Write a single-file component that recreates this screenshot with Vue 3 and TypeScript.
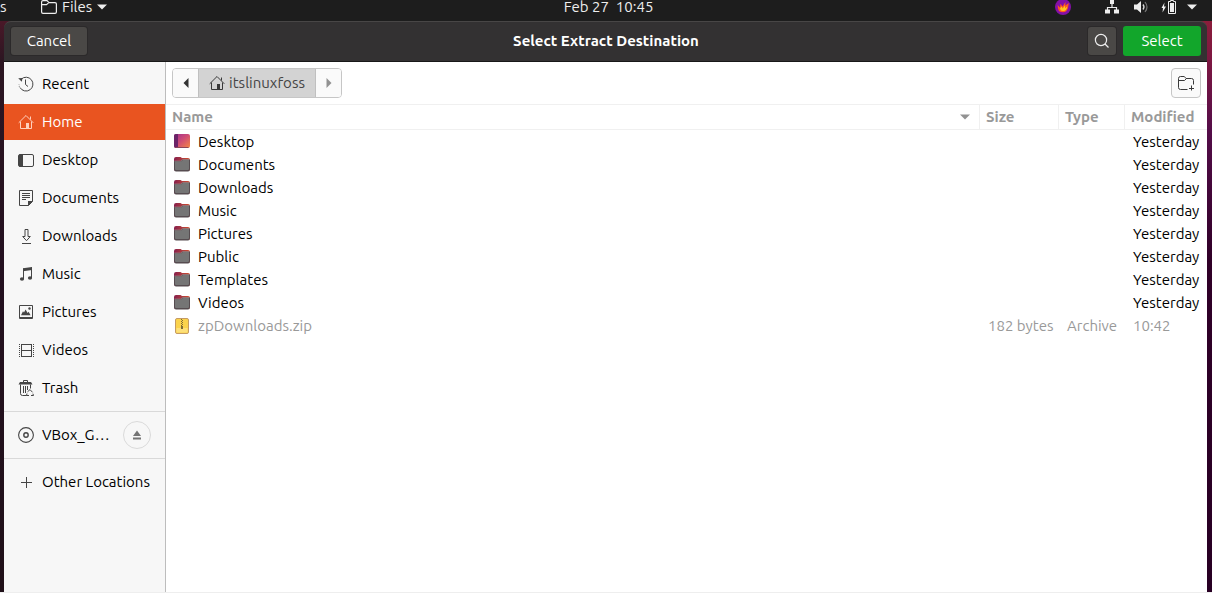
<script setup lang="ts">
interface Place {
  name: string
  icon: string
}

interface Entry {
  name: string
  kind: 'desktop' | 'folder' | 'archive'
  size: string
  type: string
  modified: string
}

const places: Place[] = [
  { name: 'Recent', icon: 'recent' },
  { name: 'Home', icon: 'home' },
  { name: 'Desktop', icon: 'desktop' },
  { name: 'Documents', icon: 'documents' },
  { name: 'Downloads', icon: 'downloads' },
  { name: 'Music', icon: 'music' },
  { name: 'Pictures', icon: 'pictures' },
  { name: 'Videos', icon: 'videos' },
  { name: 'Trash', icon: 'trash' },
]

const folder = (name: string): Entry => ({
  name,
  kind: name === 'Desktop' ? 'desktop' : 'folder',
  size: '',
  type: '',
  modified: 'Yesterday',
})

const entries: Entry[] = [
  ...['Desktop', 'Documents', 'Downloads', 'Music', 'Pictures', 'Public', 'Templates', 'Videos'].map(folder),
  { name: 'zpDownloads.zip', kind: 'archive', size: '182 bytes', type: 'Archive', modified: '10:42' },
]
</script>

<template>
  <div class="screen">
    <header class="panel">
      <div class="panel-left">
        <span class="activities">s</span>
        <button class="app-menu" type="button">
          <svg width="16" height="16" viewBox="0 0 16 16" fill="none" stroke="#eee" stroke-width="1.2">
            <path d="M.6 12.5V3Q.6 1.6 2 1.6h4L8 3.6h6q1.4 0 1.4 1.4v8q0 1.4-1.4 1.4H2Q.6 14.4.6 13zM1 5.6h4.5l2.3-2" />
          </svg>
          <span>Files</span>
          <svg class="caret" width="10" height="6" viewBox="0 0 10 6"><path d="M0 .5h10L5 5.5z" fill="#eee" /></svg>
        </button>
      </div>
      <time class="clock">Feb 27&nbsp; 10:45</time>
      <div class="tray">
        <svg class="flame" width="16" height="16" viewBox="0 0 16 16">
          <circle cx="8" cy="8" r="8" fill="#8410a8" />
          <path d="M2.5 6 5 8.500l.5-3.700 2 2.700L10.500 3l-.2 3.500L13.800 4l-.8 5q-1.200 4.200-5.200 4.200T3.200 10z" fill="#ff5a1e" />
          <path d="m5 9.500 1.600-2 1 2L10 6.500v2.700l2.200-1.700q-.5 4.500-4.200 4.500-2.700 0-3-2.500z" fill="#ffc71f" />
        </svg>
        <svg class="network" width="16" height="16" viewBox="0 0 16 16">
          <path d="M6 1h4v4H6zM1 10.500h5v4H1zM10 10.500h5v4h-5z" fill="#eee" />
          <path d="M8 5v3.500M3.500 11V8.500h9V11" fill="none" stroke="#eee" stroke-width="1.2" />
        </svg>
        <svg class="sound" width="16" height="16" viewBox="0 0 16 16">
          <path d="M1 5.500h3L8 2v12l-4-3.500H1z" fill="#eee" />
          <path d="M10 5.500q2 2.500 0 5" fill="none" stroke="#ddd" stroke-width="1.3" />
          <path d="M12 3q4 5 0 10" fill="none" stroke="#777" stroke-width="1.2" />
        </svg>
        <svg class="battery" width="16" height="16" viewBox="0 0 16 16">
          <path d="M3.500 3.500.5 9H2l-.5 4.500 3.500-6H3z" fill="#eee" />
          <path d="M7.500 2.500h2v-1h3v1h2v12h-7z" fill="none" stroke="#eee" />
          <path d="M9 4h4v9H9z" fill="#eee" />
        </svg>
        <svg width="10" height="6" viewBox="0 0 10 6"><path d="M0 .5h10L5 5.5z" fill="#eee" /></svg>
      </div>
    </header>

    <main class="desktop">
      <section class="dialog" aria-labelledby="dialog-title">
        <div class="titlebar">
          <div><button class="dark-button cancel" type="button">Cancel</button></div>
          <h1 id="dialog-title">Select Extract Destination</h1>
          <div class="actions">
            <button class="dark-button search" type="button" aria-label="Search">
              <svg width="16" height="16" viewBox="0 0 16 16" fill="none" stroke="#eee" stroke-width="1.2">
                <circle cx="7" cy="7" r="5.6" /><path d="m11 11 3.5 3.5" />
              </svg>
            </button>
            <button class="dark-button select" type="button">Select</button>
          </div>
        </div>

        <div class="body">
          <nav class="sidebar" aria-label="Places">
            <ul class="places">
              <li v-for="place in places" :key="place.name">
                <a href="#" class="place" :class="{ active: place.name === 'Home' }">
                  <svg width="16" height="16" viewBox="0 0 16 16" fill="none" stroke="currentColor">
                    <template v-if="place.icon === 'recent'">
                      <path d="M3.2 3.2A6.9 6.9 0 1 1 2 11.5" />
                      <path d="M1 8.2v.3M1.3 10.2l.2.3" stroke-width="1.4" />
                      <path d="M.2 2.2 4.5 2 3.8 5.8z" fill="currentColor" stroke="none" />
                      <path d="M7.5 3.5v5l2.5 2" />
                    </template>
                    <template v-else-if="place.icon === 'home'">
                      <path d="M.7 8.8 8 1.5l7.3 7.3M2.5 7.5v7h11v-7M12.5 5.5v-3" />
                      <path d="M8 9h3v5.5H8z" fill="currentColor" stroke="none" />
                    </template>
                    <template v-else-if="place.icon === 'desktop'">
                      <rect x=".5" y="2.5" width="15" height="12" rx="1.5" />
                      <path d="M1 2.5h4v12H1z" fill="currentColor" stroke="none" />
                    </template>
                    <template v-else-if="place.icon === 'documents'">
                      <path d="M1.5.5h13v11l-4 4h-9zM4 3.5h8M4 5.5h8M4 7.5h8M4 9.5h4" />
                      <path d="M10 11h5l-5 5z" fill="currentColor" stroke="none" />
                    </template>
                    <template v-else-if="place.icon === 'downloads'">
                      <path d="M7 1.5h3v7h2.3l-3.8 4.2-3.8-4.2H7zM4 15.5h9" />
                    </template>
                    <template v-else-if="place.icon === 'music'">
                      <path d="M5.5 13V2.5M13.5 12V1.5" />
                      <path d="M5 2.2 14 1v3L5 5.2z" fill="currentColor" stroke="none" />
                      <ellipse cx="4" cy="13" rx="2.1" ry="1.8" fill="currentColor" stroke="none" />
                      <ellipse cx="12" cy="12" rx="2.1" ry="1.8" fill="currentColor" stroke="none" />
                    </template>
                    <template v-else-if="place.icon === 'pictures'">
                      <path d="M1.5 1.5h13v13h-13zM1 13.5h14" />
                      <path d="m3 11.3 2-4 1 1.2 1.6-3 2 3.4 1-1.2 2 3.6z" fill="currentColor" stroke="none" />
                      <circle cx="11.5" cy="4.5" r="1.2" fill="currentColor" stroke="none" />
                    </template>
                    <template v-else-if="place.icon === 'videos'">
                      <path d="M3.5 2v13M13.5 2v13M3.5 2.5h10M3.5 8.5h10M3.5 14.5h10" />
                      <path d="M1.5 2v13M15.5 2v13" stroke-dasharray="1 1" />
                    </template>
                    <template v-else>
                      <path d="M5.5 2.5v-2h4v2M2.5 4.5v9q0 2 2 2h4M12.5 4.5v4" />
                      <path d="M2 2h11l1.5 2.5H.5z" fill="currentColor" stroke="none" />
                      <path d="M5.5 6v7M7.5 6v7M9.5 6v4" />
                      <path d="M9.5 11.8 12 9.6l2.5 2.7M9 13.5l-.5 2H11M13 15.5h2.5l-.6-1.8" />
                    </template>
                  </svg>
                  <span>{{ place.name }}</span>
                </a>
              </li>
            </ul>
            <div class="mount">
              <a href="#" class="place">
                <svg width="16" height="16" viewBox="0 0 16 16" fill="none" stroke="currentColor">
                  <circle cx="8" cy="8" r="7.4" stroke-width="1.1" /><circle cx="8" cy="8" r="2.2" stroke-width="1.4" />
                </svg>
                <span>VBox_G…</span>
              </a>
              <button class="eject" type="button" aria-label="Eject">
                <svg width="10" height="10" viewBox="0 0 10 10"><path d="M5 .5 9 6H1zM1 7.5h8v2H1z" fill="#747474" /></svg>
              </button>
            </div>
            <a href="#" class="place other">
              <svg width="16" height="16" viewBox="0 0 16 16" fill="none" stroke="currentColor">
                <path d="M3 8.5h11M8.5 3v11" />
              </svg>
              <span>Other Locations</span>
            </a>
          </nav>

          <div class="browser">
            <div class="toolbar">
              <div class="pathbar">
                <button class="step" type="button" aria-label="Back">
                  <svg width="6" height="10" viewBox="0 0 6 10"><path d="M5.5 0v10L.5 5z" fill="#333" /></svg>
                </button>
                <button class="crumb" type="button">
                  <svg width="16" height="16" viewBox="0 0 16 16" fill="none" stroke="#3a3a3a">
                    <path d="M.7 8.8 8 1.5l7.3 7.3M2.5 7.5v7h11v-7M12.5 5.5v-3" />
                    <path d="M8 9h3v5.5H8z" fill="#3a3a3a" stroke="none" />
                  </svg>
                  <span>itslinuxfoss</span>
                </button>
                <button class="step" type="button" aria-label="Forward">
                  <svg width="6" height="10" viewBox="0 0 6 10"><path d="M.5 0v10l5-5z" fill="#929292" /></svg>
                </button>
              </div>
              <button class="new-folder" type="button" aria-label="Create Folder">
                <svg width="16" height="16" viewBox="0 0 16 16" fill="none" stroke="#3a3a3a">
                  <path d="M9.5 14.5h-7q-2 0-2-2v-9q0-2 2-2h3.8l1.7 2h5.500q2 0 2 2v4M.5 5.500h6l2-2M13.500 10.500v5M11 13.500h5" />
                </svg>
              </button>
            </div>

            <table class="files">
              <colgroup>
                <col />
                <col class="col-size" />
                <col class="col-type" />
                <col class="col-modified" />
              </colgroup>
              <thead>
                <tr>
                  <th scope="col">
                    <div class="sorted">
                      <span>Name</span>
                      <svg width="10" height="6" viewBox="0 0 10 6"><path d="M0 .5h10L5 5.500z" fill="#929292" /></svg>
                    </div>
                  </th>
                  <th scope="col">Size</th>
                  <th scope="col">Type</th>
                  <th scope="col">Modified</th>
                </tr>
              </thead>
              <tbody>
                <tr v-for="entry in entries" :key="entry.name" :class="{ disabled: entry.kind === 'archive' }">
                  <td>
                    <div class="file">
                      <svg v-if="entry.kind === 'desktop'" width="16" height="16" viewBox="0 0 16 16">
                        <defs>
                          <linearGradient id="desk" x1="0" y1="0" x2="1" y2="1">
                            <stop offset="0" stop-color="#a02c91" />
                            <stop offset=".5" stop-color="#d14f73" />
                            <stop offset="1" stop-color="#f58a42" />
                          </linearGradient>
                        </defs>
                        <rect y="0" width="16" height="14" rx="2" fill="url(#desk)" />
                        <path d="M2 0h2v14H2q-2 0-2-2V2q0-2 2-2z" fill="#6b2468" />
                        <path d="M1.500 13.500h13" stroke="#8a4658" />
                      </svg>
                      <svg v-else-if="entry.kind === 'folder'" width="16" height="16" viewBox="0 0 16 16">
                        <defs>
                          <linearGradient id="tab"><stop offset="0" stop-color="#86204d" /><stop offset="1" stop-color="#d4512f" /></linearGradient>
                        </defs>
                        <path d="M2 0h4.500L8 1h6q2 0 2 2v9q0 2-2 2H2q-2 0-2-2V2q0-2 2-2z" fill="url(#tab)" />
                        <path d="M0 4h6.500L8.500 2.500H16V12q0 2.500-2 2.500H2q-2 0-2-2.500z" fill="#564c50" />
                        <path d="M1 4.500h6L9 3h6v9q0 1-1 1H2q-1 0-1-1z" fill="#757575" />
                        <path d="M.5 4h6.200l2-1.500h6.800" fill="none" stroke="#9b8588" stroke-width=".7" />
                      </svg>
                      <svg v-else width="16" height="16" viewBox="0 0 16 16">
                        <rect x="1.500" y=".5" width="13" height="15" rx="1.500" fill="#fbd34c" stroke="#c59b64" />
                        <path d="M2.500 10h11v4.500h-11z" fill="#fde07a" />
                        <path d="M7.500 1v7M8.500 2v7" stroke="#806c35" stroke-dasharray="1 1" />
                        <path d="M7 8h2v3H7z" fill="#806c35" />
                      </svg>
                      <span>{{ entry.name }}</span>
                    </div>
                  </td>
                  <td>{{ entry.size }}</td>
                  <td>{{ entry.type }}</td>
                  <td>{{ entry.modified }}</td>
                </tr>
              </tbody>
            </table>
          </div>
        </div>
      </section>
    </main>
  </div>
</template>

<style>
body {
  margin: 0;
}
</style>

<style scoped>
.screen {
  display: flex;
  flex-direction: column;
  min-height: 100vh;
  box-sizing: border-box;
  border-bottom: 1px solid #eeeeee;
  font: 15px/20px Ubuntu, "Noto Sans", sans-serif;
  color: #000;
}
svg {
  display: block;
  flex: none;
}
button {
  font: inherit;
  color: inherit;
  margin: 0;
  padding: 0;
  box-sizing: border-box;
}
a {
  color: inherit;
  text-decoration: none;
}

.panel {
  display: grid;
  grid-template-columns: 1fr auto 1fr;
  grid-template-rows: 14px;
  align-items: center;
  padding-bottom: 7px;
  padding-right: 15px;
  background: #1d1d1d;
  color: #eee;
}
.panel-left {
  display: flex;
  gap: 34px;
}
.activities {
  width: 7px;
}
.app-menu {
  display: flex;
  align-items: center;
  gap: 5px;
  border: 0;
  background: none;
}
.clock {
  padding-left: 20px;
}
.tray {
  display: flex;
  justify-content: flex-end;
  align-items: center;
}
.flame {
  margin-right: 33px;
}
.network {
  margin-right: 13px;
}
.sound {
  margin-right: 12px;
}
.battery {
  margin-right: 10px;
}

.desktop {
  flex: 1;
  display: flex;
  padding: 0 5px 0 4px;
  background:
    linear-gradient(#8b1d3b, #7d1742 40px, #540d49 110px, #300028 240px, #280024) right / 50% 100% no-repeat,
    linear-gradient(#4a1828, #2c1622 40px, #241120 240px, #201019);
}
.dialog {
  flex: 1;
  display: flex;
  flex-direction: column;
  min-width: 0;
}
.titlebar {
  display: grid;
  grid-template-columns: 1fr auto 1fr;
  align-items: center;
  height: 41px;
  box-sizing: border-box;
  padding: 0 6px 1px 7px;
  border-top: 1px solid #484646;
  border-bottom: 1px solid #181818;
  border-radius: 7px 7px 0 0;
  background: #333132;
  color: #fff;
}
h1 {
  margin: 0;
  font-size: 15px;
  font-weight: 700;
}
.actions {
  display: flex;
  justify-content: flex-end;
  align-items: center;
  gap: 7px;
}
.dark-button {
  display: flex;
  align-items: center;
  justify-content: center;
  height: 28px;
  border: 0;
  border-radius: 3px;
  background: #4a4846;
  box-shadow: 0 0 0 1px #2b292a;
}
.cancel {
  width: 76px;
}
.search {
  width: 28px;
}
.select {
  width: 78px;
  height: 30px;
  background: #12a62b;
  box-shadow: none;
}

.body {
  flex: 1;
  display: flex;
  background: #fff;
}
.sidebar {
  width: 161px;
  flex: none;
  border-right: 1px solid #bdbdbd;
  background: #f7f7f7;
}
.places {
  display: flex;
  flex-direction: column;
  gap: 2px;
  margin: 0;
  padding: 4px 0 5px;
  list-style: none;
}
.place {
  display: flex;
  align-items: center;
  gap: 8px;
  height: 36px;
  padding-left: 14px;
  white-space: nowrap;
}
.place svg {
  color: #454545;
}
.active {
  background: #e95420;
  color: #fff;
}
.active svg {
  color: #ffd0bd;
}
.mount {
  display: flex;
  align-items: center;
  justify-content: space-between;
  height: 46px;
  padding-right: 14px;
  border: solid #d9d9d9;
  border-width: 1px 0;
}
.eject {
  display: flex;
  align-items: center;
  justify-content: center;
  width: 28px;
  height: 28px;
  border: 1px solid #dadada;
  border-radius: 50%;
  background: none;
}
.other {
  margin-top: 5px;
}

.browser {
  flex: 1;
  min-width: 0;
}
.toolbar {
  display: flex;
  justify-content: space-between;
  padding: 6px;
}
.pathbar {
  display: flex;
  height: 30px;
  box-sizing: border-box;
  overflow: hidden;
  border: 1px solid #c6c6c6;
  border-radius: 4px;
}
.pathbar button {
  display: flex;
  align-items: center;
  justify-content: center;
  border: 0;
}
.step {
  width: 25px;
  background: #fafafa;
}
.pathbar .crumb {
  gap: 4px;
  width: 118px;
  border: solid #c0c0c0;
  border-width: 0 1px;
  background: #d3d3d3;
  color: #454545;
}
.new-folder {
  display: flex;
  align-items: center;
  justify-content: center;
  width: 30px;
  height: 30px;
  border: 1px solid #c6c6c6;
  border-radius: 4px;
  background: #fafafa;
}

.files {
  width: 100%;
  table-layout: fixed;
  border-collapse: separate;
  border-spacing: 0;
}
.col-size {
  width: 79px;
}
.col-type {
  width: 66px;
}
.col-modified {
  width: 83px;
}
th {
  height: 24px;
  padding: 0 0 0 6px;
  border: solid #f0f0f0;
  border-width: 1px 0 1px 1px;
  text-align: left;
  font-weight: 700;
  color: #999;
}
th:first-child {
  border-left: 0;
}
.sorted {
  display: flex;
  align-items: center;
  justify-content: space-between;
  padding-right: 9px;
}
td {
  height: 23px;
  padding: 0 0 0 9px;
  white-space: nowrap;
}
td:first-child {
  padding-left: 8px;
}
.file {
  display: flex;
  align-items: center;
  gap: 8px;
}
.disabled {
  color: #999;
}
</style>
